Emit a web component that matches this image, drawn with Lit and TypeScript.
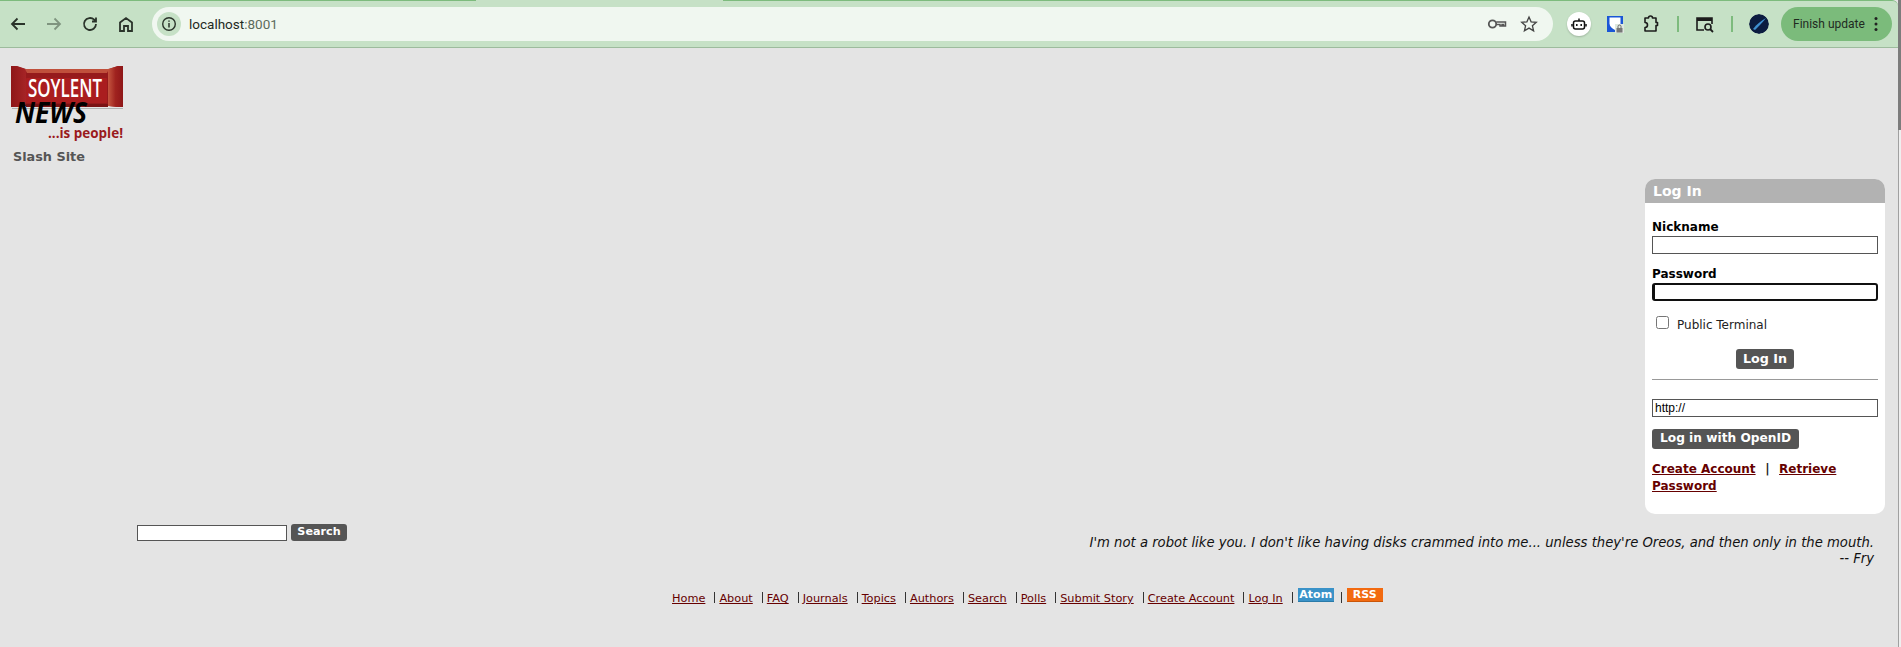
import { LitElement, html, css, svg } from "lit";
import { customElement } from "lit/decorators.js";

const footerLinks = ["Home","About","FAQ","Journals","Topics","Authors","Search","Polls","Submit Story","Create Account","Log In"];

@customElement("app-root")
export class AppRoot extends LitElement {
  static styles = css`
    :host { display: block; width: 1901px; height: 647px; overflow: hidden; background: #e4e4e4; font-family: "DejaVu Sans", Verdana, sans-serif; color: #000; position: relative; }
    .chrome { width: 1898px; height: 48px; box-sizing: border-box; background: #c6e1c6; border-top: 1px solid #7dbb7d; border-bottom: 1px solid #9dbb9d; display: flex; align-items: center; position: relative; border-top-right-radius: 6px; }
    .tabgap { position: absolute; left: 476px; top: -1px; width: 247px; height: 1px; background: #c6e1c6; }
    .navs { display: flex; align-items: center; width: 144px; }
    .slot { width: 36px; height: 34px; display: flex; align-items: center; justify-content: center; flex: none; }
    .slot.s { width: 18px; }
    .slot.o { width: 32px; }
    .ic { width: 24px; height: 24px; display: block; fill: none; stroke: #2a332a; stroke-width: 1.8; }
    .ic.dim { stroke: #7f947f; }
    .omni { margin-left: 8px; width: 1401px; height: 34px; border-radius: 17px; background: #f0f7f0; display: flex; align-items: center; font: 13.5px "Roboto", sans-serif; color: #1f2a1f; box-sizing: border-box; padding-right: 8px; }
    .infoc { width: 24px; height: 24px; margin-left: 5px; border-radius: 50%; background: #c6e1c6; display: flex; align-items: center; justify-content: center; margin-right: 8px; }
    .port { color: #5c6b5c; }
    .omni .sp { flex: 1; }
    .tools { display: flex; align-items: center; flex: 1; padding-left: 8px; }
    .bot { width: 24px; height: 24px; border-radius: 50%; background: #fff; box-shadow: 0 1px 2px #0003; display: flex; align-items: center; justify-content: center; }
    .sep { width: 1.5px; height: 16px; background: #7dbb7d; }
    .avatar { width: 20px; height: 20px; border-radius: 50%; display: block; }
    .update { width: 111px; height: 34px; border-radius: 17px; background: #7bbb7b; display: flex; align-items: center; font: 12px "Roboto", sans-serif; color: #1f2a1f; padding-left: 12px; box-sizing: border-box; gap: 9px; margin-left: 4px; flex: none; }
    .update svg { display: block; }
    .page { height: 599px; display: flex; flex-direction: column; }
    .track { position: absolute; right: 0; top: 0; height: 647px; width: 3px; background: #efefef; border-left: 1px solid #a0a0a0; box-sizing: border-box; }
    .thumb { position: absolute; right: 0; top: 0; width: 3px; height: 130px; background: #7c7c7c; }
    .head { padding: 18px 0 0 11px; }
    .logo { display: block; overflow: visible; }
    .site { font-weight: 700; font-size: 12.8px; color: #555; margin: 5px 0 0 2px; line-height: 16px; }
    .mid { display: flex; justify-content: flex-end; padding-right: 16px; margin-top: 14px; }
    .box { width: 240px; height: 335px; border-radius: 10px; background: #fff; overflow: hidden; box-sizing: border-box; }
    .box h2 { margin: 0; height: 24px; background: #b2b2b2; color: #fff; font-size: 14px; font-weight: 700; line-height: 25px; padding-left: 8px; }
    .form { padding: 16px 7px 0 7px; font-size: 12px; }
    label { display: block; font-weight: 700; line-height: 16px; }
    input[type=text] { display: block; width: 226px; height: 18px; box-sizing: border-box; border: 1px solid #555; background: #fff; margin: 1px 0 0; padding: 0 2px; font: 12px "Liberation Sans", sans-serif; color: #000; outline: none; border-radius: 0; }
    input[type=text].focus { border: 2px solid #101010; border-radius: 3px; margin-top: 1px; background: linear-gradient(#111,#111) left top / 1px 100% no-repeat #fff; }
    .pw { margin-top: 12px; }
    .pub { display: flex; align-items: flex-start; margin: 15px 0 0 4px; height: 16px; font: 12px/18px "DejaVu Sans", sans-serif; color: #222; }
    .check { width: 13px; height: 13px; box-sizing: border-box; border: 1px solid #767676; border-radius: 2.5px; margin-right: 8px; background: #fff; }
    .btn { display: inline-block; background: #555; color: #fff; font: 700 12.7px "DejaVu Sans", sans-serif; border-radius: 3px; padding: 0 7px; height: 20px; line-height: 19px; border: 0; box-sizing: border-box; white-space: nowrap; }
    .center { text-align: center; margin-top: 17px; height: 20px; }
    hr { border: 0; border-top: 1px solid #999; margin: 10px 0 0; }
    input[type=text].openid { margin-top: 19px; }
    .oidbtn { margin-top: 12px; display: block; height: 20px; width: 147px; font-size: 12.2px; padding: 0 8px; }
    .links { margin-top: 12px; font-weight: 700; line-height: 17px; font-size: 12px; color: #222; }
    .div { margin: 0 1.2px; }
    a { color: #660000; text-decoration: underline; }
    .bar { position: relative; height: 74px; }
    .search { position: absolute; left: 137px; top: 10px; display: flex; gap: 4px; align-items: flex-start; }
    .search input[type=text] { width: 150px; height: 16px; margin: 1px 0 0; }
    .search .btn { height: 17px; line-height: 16px; padding: 0 6px; font-size: 11.2px; width: 56px; text-align: center; }
    .quote { position: absolute; right: 27px; top: 21px; text-align: right; font-style: italic; font-size: 13.2px; line-height: 16px; color: #111; }
    .footer { display: flex; align-items: flex-start; padding-left: 672px; font-size: 11.3px; line-height: 13px; }
    .fi { padding: 0 9px 0 4px; border-left: 1px solid #333; height: 11px; margin-top: 4px; white-space: nowrap; }
    .fi:first-child { border-left: 0; padding-left: 0; }
    .fi.b { padding-left: 5px; padding-right: 7px; }
    .badge { display: block; color: #fff; font-weight: 700; font-size: 11px; line-height: 13px; text-align: center; width: 36px; height: 14px; margin-top: -4px; box-sizing: border-box; }
    .atom { background: #3a92c8; border-bottom: 1px solid #2a7aa8; }
    .rss { background: #f26a10; border-bottom: 1px solid #c95508; }
  `;

  private logo() {
    return svg`<svg class="logo" width="114" height="78" viewBox="0 0 114 78" xmlns="http://www.w3.org/2000/svg">
      <defs>
        <linearGradient id="side" x1="0" x2="1" y1="0" y2="0"><stop offset="0" stop-color="#8e1618"/><stop offset="1" stop-color="#a62426"/></linearGradient>
        <linearGradient id="rside" x1="0" x2="1" y1="0" y2="0"><stop offset="0" stop-color="#c4553f"/><stop offset=".5" stop-color="#a0231f"/><stop offset="1" stop-color="#8e1618"/></linearGradient>
      </defs>
      <path d="M1 42 H112 V43 H1Z" fill="#000" opacity=".22"/>
      <path d="M0 0 H5 L14 3 H98 L107 0 H112 V41 H107 L98 40 H14 L5 41 H0Z" fill="#941a1c"/>
      <path d="M0 0 H6 L15 3 V40 L6 41 H0Z" fill="url(#side)"/>
      <path d="M97 3 L107 0 H112 V41 H106 L97 40Z" fill="url(#rside)"/>
      <path d="M14 3 H98 L96 7 H16Z" fill="#c0503c"/>
      <path d="M15 7 H97 V36 L96 40 H15Z" fill="#961a1c"/>
      <path d="M15 38 H97 V41 H15Z" fill="#7a1214"/>
      <rect x="15" y="12" width="81" height="25" rx="1" fill="#aa1d1f"/>
      <text x="54" y="31" text-anchor="middle" font-family="'Open Sans',sans-serif" font-size="26" font-weight="600" fill="#fff" textLength="74" lengthAdjust="spacingAndGlyphs">SOYLENT</text>
      <text x="4" y="57" font-family="'Open Sans',sans-serif" font-size="28" font-weight="700" font-style="italic" fill="#000" textLength="72" lengthAdjust="spacingAndGlyphs">NEWS</text>
      <text x="37" y="72" font-family="'Open Sans',sans-serif" font-size="14" font-weight="700" fill="#9a1a1c" textLength="75" lengthAdjust="spacingAndGlyphs">...is people!</text>
    </svg>`;
  }

  render() {
    return html`
      <div class="chrome">
        <div class="tabgap"></div>
        <div class="navs">
          <div class="slot"><svg class="ic" viewBox="0 0 24 24"><path d="M19 12H6M11.500 6.500 6 12l5.500 5.500"/></svg></div>
          <div class="slot"><svg class="ic dim" viewBox="0 0 24 24"><path d="M5 12h13M12.500 6.500 18 12l-5.500 5.500"/></svg></div>
          <div class="slot"><svg class="ic" viewBox="0 0 24 24"><path d="M18 12a6 6 0 1 1-1.800-4.300L18 9.500M18 5.500v4h-4"/></svg></div>
          <div class="slot"><svg class="ic" viewBox="0 0 24 24"><path d="M6 19v-8.500L12 6l6 4.500V19h-4v-5h-4v5z"/></svg></div>
        </div>
        <div class="omni">
          <span class="infoc"><svg width="16" height="16" viewBox="0 0 16 16"><circle cx="8" cy="8" r="6.300" fill="none" stroke="#2a332a" stroke-width="1.400"/><path d="M8 7v4.500M8 4.500v1.300" stroke="#2a332a" stroke-width="1.500"/></svg></span>
          <span>localhost<span class="port">:8001</span></span>
          <span class="sp"></span>
          <div class="slot o"><svg width="20" height="20" viewBox="0 0 20 20"><circle cx="5.500" cy="10" r="3.700" fill="none" stroke="#555" stroke-width="1.800"/><path d="M9.200 8h9.300v4h-2v-1.500h-1.500V12h-2v-1.500H9.200" fill="none" stroke="#555" stroke-width="1.500"/></svg></div>
          <div class="slot o"><svg width="20" height="20" viewBox="0 0 20 20"><path d="M10 3l2.100 4.800 5.200.500-3.900 3.400 1.200 5.100L10 14.100l-4.600 2.700 1.200-5.100-3.900-3.400 5.200-.500z" fill="none" stroke="#444" stroke-width="1.300"/></svg></div>
        </div>
        <div class="tools">
          <div class="slot"><span class="bot"><svg width="16" height="16" viewBox="0 0 16 16"><rect x="2.500" y="5" width="11" height="8" rx="2" fill="none" stroke="#111" stroke-width="1.500"/><path d="M8 2.500V5M5.800 8v2M10.200 8v2M1 8v2.500M15 8v2.500" stroke="#111" stroke-width="1.500"/></svg></span></div>
          <div class="slot"><svg width="18" height="18" viewBox="0 0 18 18"><rect x="1" y="1" width="16" height="16" fill="#1a56d6"/><path d="M3.500 2.500h11v6c0 3-2.500 5-5.500 6.500-3-1.500-5.500-3.500-5.500-6.500z" fill="#fff"/><rect x="9" y="9" width="9" height="9" fill="#dfe8df"/><path d="M10.500 13h6v4.500h-6z" fill="#777"/><path d="M12 13v-1.500a1.500 1.500 0 0 1 3 0V13" fill="none" stroke="#666"/></svg></div>
          <div class="slot"><svg width="20" height="20" viewBox="0 0 20 20"><path d="M4 4h3.500a2 2 0 0 1 4 0H15v4.500h1.500v3H15V17H4v-3.500a2.500 2.500 0 0 0 0-5z" fill="none" stroke="#1c1c1c" stroke-width="1.600" stroke-linejoin="round"/></svg></div>
          <div class="slot s"><span class="sep"></span></div>
          <div class="slot"><svg width="20" height="20" viewBox="0 0 20 20"><path d="M9 16H2V4h15v6" fill="none" stroke="#1c1c1c" stroke-width="1.600"/><path d="M2 4h15v3H2z" fill="#1c1c1c"/><circle cx="13" cy="13" r="3" fill="none" stroke="#1c1c1c" stroke-width="1.600"/><path d="M15 15l3 3" stroke="#1c1c1c" stroke-width="1.800"/></svg></div>
          <div class="slot s"><span class="sep"></span></div>
          <div class="slot"><svg class="avatar" viewBox="0 0 20 20"><circle cx="10" cy="10" r="10" fill="#0c1c40"/><path d="M4 15C8 10 12 7 17 4 14 8 10 12 6 16z" fill="#3f8fd0"/></svg></div>
          <div class="update"><span>Finish update</span>
            <svg width="4" height="16" viewBox="0 0 4 16"><circle cx="2" cy="2.500" r="1.500" fill="#222"/><circle cx="2" cy="8" r="1.500" fill="#222"/><circle cx="2" cy="13.500" r="1.500" fill="#222"/></svg>
          </div>
        </div>
      </div>
      <div class="page">
        <div class="head">
          ${this.logo()}
          <div class="site">Slash Site</div>
        </div>
        <div class="mid">
          <div class="box">
            <h2>Log In</h2>
            <div class="form">
              <label>Nickname</label>
              <input type="text" />
              <label class="pw">Password</label>
              <input type="text" class="focus" />
              <div class="pub"><span class="check"></span>Public Terminal</div>
              <div class="center"><span class="btn">Log In</span></div>
              <hr />
              <input class="openid" type="text" value="http://" />
              <span class="btn oidbtn">Log in with OpenID</span>
              <div class="links"><a href="#">Create Account</a>&nbsp; <span class="div">|</span> &nbsp;<a href="#">Retrieve Password</a></div>
            </div>
          </div>
        </div>
        <div class="bar">
          <div class="search"><input type="text" /><span class="btn">Search</span></div>
          <div class="quote">I'm not a robot like you. I don't like having disks crammed into me... unless they're Oreos, and then only in the mouth.<br />-- Fry</div>
        </div>
        <div class="footer">
          ${footerLinks.map(l => html`<div class="fi"><a href="#">${l}</a></div>`)}
          <div class="fi b"><span class="badge atom">Atom</span></div>
          <div class="fi b"><span class="badge rss">RSS</span></div>
        </div>
      </div>
      <div class="track"><div class="thumb"></div></div>
    `;
  }
}
